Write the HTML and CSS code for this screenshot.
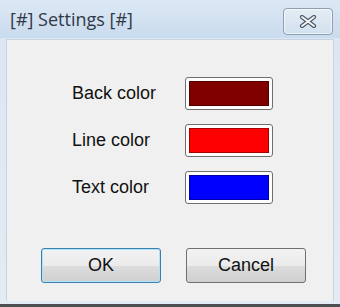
FILE: index.html
```html
<!DOCTYPE html>
<html lang="en">
<head>
  <meta charset="UTF-8" />
  <title>[#] Settings [#]</title>
  <link rel="stylesheet" href="styles.css">
</head>
<body>
  <div class="window">
    <div class="titlebar">
      <span class="title">[#] Settings [#]</span>
      <button class="close-btn">
        <svg viewBox="0 0 18 13" width="18" height="13">
          <path d="M3 2 L15 11 M15 2 L3 11" stroke="#4f5967" stroke-width="4.2" stroke-linecap="round"/>
          <path d="M3 2 L15 11 M15 2 L3 11" stroke="#f6f7f9" stroke-width="1.8" stroke-linecap="round"/>
        </svg>
      </button>
    </div>

    <div class="client">
      <div class="rows">
        <div class="label">Back color</div>
        <div class="swatch"><span class="fill back"></span></div>
        <div class="label">Line color</div>
        <div class="swatch"><span class="fill line"></span></div>
        <div class="label">Text color</div>
        <div class="swatch"><span class="fill text"></span></div>
      </div>

      <div class="buttons">
        <button class="btn default">OK</button>
        <button class="btn">Cancel</button>
      </div>
    </div>
    <div class="frame-bottom"></div>
  </div>
</body>
</html>
```

FILE: styles.css
```css
html, body {
  margin: 0;
  padding: 0;
}
body {
  width: 340px;
  height: 307px;
  overflow: hidden;
  font-family: 'Liberation Sans', Arial, sans-serif;
}
.window {
  width: 340px;
  height: 307px;
  display: flex;
  flex-direction: column;
  background: linear-gradient(#d7e4f2, #dce7f3 40px, #e3ebf4);
  border-bottom: 3px solid #4d4f52;
  box-sizing: border-box;
}
.titlebar {
  height: 38px;
  flex-shrink: 0;
  display: flex;
  align-items: flex-start;
  justify-content: space-between;
  padding: 0 7px 0 10px;
  background: linear-gradient(#dde8f4, #c9dbee);
}
.title {
  margin-top: 7px;
  font-family: 'Open Sans', 'Noto Sans', sans-serif;
  font-size: 18px;
  color: #2f3947;
}
.close-btn {
  margin-top: 8px;
  width: 50px;
  height: 27px;
  border: 1px solid #8f9fb2;
  border-radius: 4px;
  background: linear-gradient(#e4edf6, #d2e0ee);
  box-shadow: inset 0 0 0 1px rgba(255,255,255,0.6);
  display: flex;
  align-items: center;
  justify-content: center;
  padding: 0;
}
.client {
  flex: 1;
  margin: 1px 6px 0 6px;
  background: #f0f0f0;
  border: 1px solid #c8d4e2;
  border-bottom: none;
}
.rows {
  display: grid;
  grid-template-columns: 113px 88px;
  grid-auto-rows: 33px;
  row-gap: 14px;
  padding: 37px 0 0 65px;
  align-items: center;
}
.label {
  font-size: 18px;
  color: #111;
}
.swatch {
  height: 33px;
  box-sizing: border-box;
  border: 1px solid #6f6f6f;
  border-radius: 3px;
  background: #fdfdfd;
  padding: 3px;
  display: flex;
}
.fill {
  flex: 1;
  border: 1px solid rgba(0,0,0,0.35);
}
.back { background: #800000; }
.line { background: #ff0000; }
.text { background: #0000ff; }
.buttons {
  display: flex;
  gap: 25px;
  padding: 44px 0 0 34px;
}
.btn {
  width: 120px;
  height: 35px;
  border: 1px solid #707070;
  border-radius: 3px;
  background: linear-gradient(#f2f2f2, #ebebeb 50%, #dddddd 51%, #cfcfcf);
  font-family: 'Liberation Sans', Arial, sans-serif;
  font-size: 18px;
  color: #111;
  padding: 0;
}
.btn.default {
  border-color: #3c7fb1;
  box-shadow: inset 0 0 0 1px #aee3f8;
}
.frame-bottom {
  height: 3px;
  flex-shrink: 0;
}
```
